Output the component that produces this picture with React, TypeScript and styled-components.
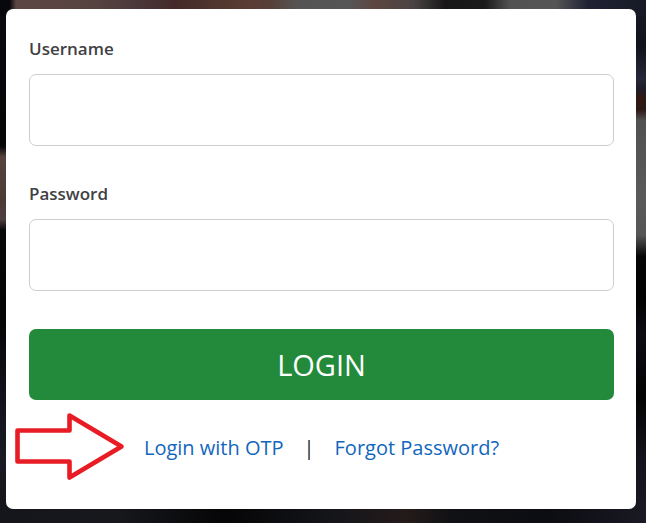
import React from "react";
import styled, { createGlobalStyle } from "styled-components";

const GlobalStyle = createGlobalStyle`
  *, *::before, *::after { box-sizing: border-box; }
  body {
    margin: 0;
    font-family: "Segoe UI", "Open Sans", "Noto Sans", sans-serif;
    color: #212529;
  }
`;

const Page = styled.main`
  min-height: 100vh;
  padding: 9px 10px 14px 6px;
  background:
    linear-gradient(90deg, #08080c 0%, #08080c 1.5%, #5c4643 2.5%, #56433f 15%, #49363a 22%,
      #432a28 27%, #593d34 38%, #58403a 42%, #545454 46%, #565656 54%, #5d4640 58%,
      #4a4343 64%, #171717 69%, #1a1a1a 75%, #535353 79%, #555555 86%, #202234 91%,
      #171a25 100%) top / 100% 16px no-repeat,
    linear-gradient(90deg, #14161c 0%, #17181c 18%, #050507 35%, #15161a 52%, #241a1a 63%,
      #101114 70%, #0c0d12 85%, #191a22 100%) bottom / 100% 20px no-repeat,
    linear-gradient(180deg, #0a0b10 0%, #060608 27%, #080608 28%, #57423e 30%, #4d3a35 38%,
      #4f3d40 42%, #09080a 44%, #050506 60%, #14141f 78%, #1a1a22 88%, #121318 100%)
      left / 12px 100% no-repeat,
    linear-gradient(180deg, #171a25 0%, #11131c 9%, #25273a 15%, #1e1c28 17%, #32180f 19%,
      #2b1916 21%, #515151 23%, #5a5a5a 38%, #555555 45%, #050505 49%, #020203 57%,
      #0c0d14 64%, #030304 76%, #13141b 87%, #191a22 100%)
      right / 16px 100% no-repeat,
    #0b0b0f;
`;

const Card = styled.form`
  display: flex;
  flex-direction: column;
  padding: 27px 22px 46px 23px;
  border-radius: 7px;
  background: #ffffff;
`;

const Field = styled.div`
  display: flex;
  flex-direction: column;
  gap: 13px;

  & + & { margin-top: 35px; }
`;

const Label = styled.label`
  font-size: 17px;
  font-weight: 600;
  line-height: 25px;
  color: #3f4144;
`;

const TextInput = styled.input`
  width: 100%;
  height: 72px;
  padding: 0 20px;
  border: 1px solid #cbcfd0;
  border-radius: 7px;
  background: #ffffff;
  font: inherit;
  font-size: 24px;
  color: inherit;
`;

const LoginButton = styled.button`
  height: 71px;
  margin-top: 38px;
  padding: 0;
  border: 0;
  border-radius: 7px;
  background: #238a3b;
  font: inherit;
  font-size: 29px;
  color: #ffffff;
  cursor: pointer;
`;

const Links = styled.nav`
  position: relative;
  display: flex;
  justify-content: center;
  gap: 20px;
  margin-top: 33px;
  font-size: 20px;
  line-height: 30px;
`;

const Link = styled.a`
  color: #1266bd;
  text-decoration: none;
`;

const Pointer = styled.svg`
  position: absolute;
  left: -15px;
  top: -21px;
  width: 112px;
  height: 70px;
`;

export default function App() {
  return (
    <>
      <GlobalStyle />
      <Page>
        <Card onSubmit={(event) => event.preventDefault()}>
          <Field>
            <Label htmlFor="username">Username</Label>
            <TextInput id="username" name="username" type="text" autoComplete="username" />
          </Field>
          <Field>
            <Label htmlFor="password">Password</Label>
            <TextInput id="password" name="password" type="password" autoComplete="current-password" />
          </Field>
          <LoginButton type="submit">LOGIN</LoginButton>
          <Links>
            <Pointer viewBox="0 0 112 70" aria-hidden="true">
              <path
                d="M3.5 18.5H55.5V3.5L107.5 34.5L55.5 65.5V49.5H3.5Z"
                fill="none"
                stroke="#e81c24"
                strokeWidth="4.6"
                strokeLinejoin="round"
              />
            </Pointer>
            <Link href="#otp">Login with OTP</Link>
            <span>|</span>
            <Link href="#forgot">Forgot Password?</Link>
          </Links>
        </Card>
      </Page>
    </>
  );
}
